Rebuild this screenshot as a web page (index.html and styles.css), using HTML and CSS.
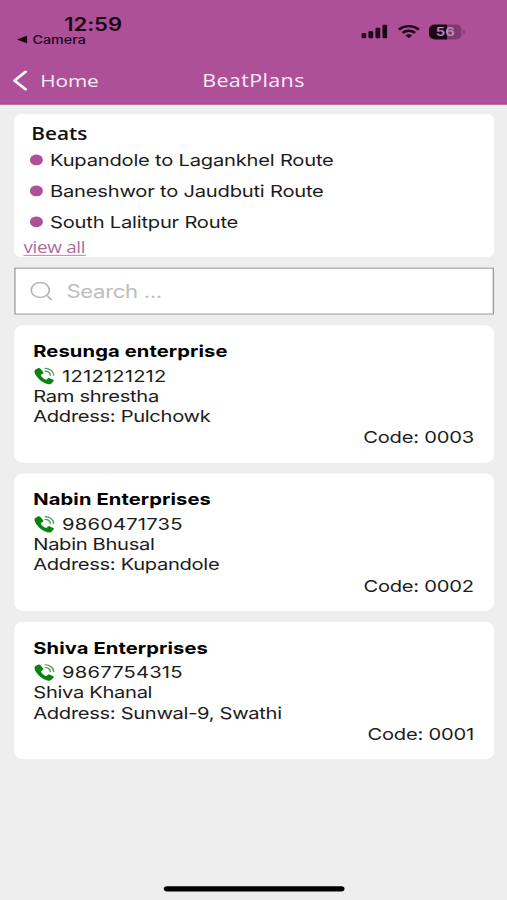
FILE: index.html
```html
<!DOCTYPE html>
<html lang="en">
<head>
<meta charset="utf-8">
<title>BeatPlans</title>
<link rel="stylesheet" href="styles.css">
</head>
<body>
<svg class="sprite" aria-hidden="true">
  <symbol id="call" viewBox="0 0 16 16">
    <path fill="#07830f" d="M3.200 .9 1.400 2C0 3.100.5 5.400 2 8.100c1.700 3 3.900 5.300 6.800 6.900 2.300 1.200 4.200 1.100 5.200-.4l1.300-1.700c.3-.5.1-1-.4-1.300l-2.700-1.500c-.5-.3-1-.2-1.300.2l-1 1c-.3.300-.7.300-1.100.1-1.300-.8-2.400-2-3.200-3.600-.2-.4-.1-.8.2-1l1.200-.9c.4-.3.500-.8.300-1.300L5.100 1.300c-.3-.6-1.300-.8-1.900-.4Z"/>
    <g fill="none" stroke="#4c9c58" stroke-width="1.100" stroke-linecap="round"><path d="M8.700 .9c3.600 0 6.600 2.900 6.600 6.500"/><path d="M8.700 3.500c2.200 0 4 1.700 4 3.900"/></g>
  </symbol>
</svg>
<div class="screen">
  <header class="header">
    <div class="status">
      <div class="status-left">
        <div class="time">12:59</div>
        <div class="return"><svg width="8" height="8" viewBox="0 0 8 8"><path d="M0 4 8 .2v7.600Z"/></svg><span>Camera</span></div>
      </div>
      <div class="status-icons">
        <svg class="signal" width="20" height="13" viewBox="0 0 20 13"><rect x="0" y="8" width="3.700" height="5" rx="1.200"/><rect x="5.400" y="6" width="3.700" height="7" rx="1.200"/><rect x="10.800" y="3" width="3.700" height="10" rx="1.200"/><rect x="16.200" y="0" width="3.700" height="13" rx="1.200"/></svg>
        <svg class="wifi" width="17" height="13" viewBox="0 0 17 13"><g fill="none" stroke="#1b0719" stroke-width="2.200"><path d="M.8 4.700c4.400-4.300 11-4.300 15.400 0"/><path d="M3.700 7.900c2.800-2.700 6.800-2.700 9.600 0"/></g><path d="M5.900 10.100c1.600-1.300 3.600-1.300 5.200 0L8.500 12.800Z"/></svg>
        <div class="battery"><div class="battery-body">56</div><div class="battery-cap"></div></div>
      </div>
    </div>
    <nav class="nav">
      <div class="back"><svg width="11" height="19" viewBox="0 0 11 19"><path d="M9.700 1.200 1.200 9.500l8.500 8.300" fill="none" stroke="#fff" stroke-width="2.300" stroke-linecap="round" stroke-linejoin="round"/></svg><span>Home</span></div>
      <h1>BeatPlans</h1>
      <div></div>
    </nav>
  </header>
  <main>
    <section class="beats">
      <h2>Beats</h2>
      <ul>
        <li>Kupandole to Lagankhel Route</li>
        <li>Baneshwor to Jaudbuti Route</li>
        <li>South Lalitpur Route</li>
      </ul>
      <a>view all</a>
    </section>
    <div class="search"><svg width="18" height="18" viewBox="0 0 18 18" fill="none" stroke="#b8b8b8" stroke-width="1.400" stroke-linecap="round"><circle cx="8" cy="8" r="7"/><path d="m13.200 13.200 3.300 3.800"/></svg><span>Search ...</span></div>
    <article class="card">
      <h3>Resunga enterprise</h3>
      <div class="phone"><svg width="16" height="17"><use href="#call"/></svg><span>1212121212</span></div>
      <div>Ram shrestha</div>
      <div>Address: Pulchowk</div>
      <div class="code">Code: 0003</div>
    </article>
    <article class="card">
      <h3>Nabin Enterprises</h3>
      <div class="phone"><svg width="16" height="17"><use href="#call"/></svg><span>9860471735</span></div>
      <div>Nabin Bhusal</div>
      <div>Address: Kupandole</div>
      <div class="code">Code: 0002</div>
    </article>
    <article class="card">
      <h3>Shiva Enterprises</h3>
      <div class="phone"><svg width="16" height="17"><use href="#call"/></svg><span>9867754315</span></div>
      <div>Shiva Khanal</div>
      <div>Address: Sunwal-9, Swathi</div>
      <div class="code">Code: 0001</div>
    </article>
  </main>
  <div class="home-indicator"></div>
</div>
</body>
</html>
```
FILE: styles.css
```css
* { box-sizing: border-box; }
html, body { margin: 0; width: 507px; height: 900px; overflow: hidden; background: #eee; }
.sprite { display: none; }
svg { display: block; flex: none; }
/* 390 x 844 pt canvas fitted to the window */
.screen {
  width: 390px; height: 844px;
  transform: scale(1.3, 1.06635); transform-origin: 0 0;
  display: flex; flex-direction: column;
  background: #eee; color: #1c1c1c;
  font: 15.5px/19.3px Inter, "Liberation Sans", sans-serif;
}
h1, h2, h3, ul { margin: 0; padding: 0; }
.header { height: 97.5px; background: #ad5097; border-bottom: 1px solid #a64a90; flex: none; }
.status { height: 54px; display: flex; justify-content: space-between; color: #1b0719; fill: #1b0719; }
.status-left { padding: 12.500px 0 0 18px; }
.time { margin-left: 31.500px; font-weight: 600; font-size: 17px; line-height: 20px; letter-spacing: -.1px; }
.return { display: flex; align-items: center; gap: 4px; margin: -1.300px 0 0 -5px; font-size: 11px; line-height: 12px; font-weight: 500; }
.status-icons { display: flex; align-items: center; padding: 5px 32.500px 0 0; height: 54px; }
.signal { position: relative; left: 2px; }
.wifi { margin-left: 9px; position: relative; left: 1px; }
.battery { display: flex; align-items: center; margin-left: 8px; gap: 1px; }
.battery-body { width: 25px; height: 14px; border-radius: 4.500px; background: linear-gradient(90deg, #1b0719 56%, #7b3b70 56%); color: #c48abb; font-size: 11.500px; font-weight: 600; line-height: 14px; text-align: center; }
.battery-cap { width: 1.500px; height: 4px; background: #8d407b; border-radius: 0 2px 2px 0; }
.nav { height: 43px; display: grid; grid-template-columns: 1fr auto 1fr; align-items: center; color: #fdeafa; font-family: "Open Sans", sans-serif; }
.back { display: flex; align-items: center; gap: 10.500px; padding-left: 9.500px; font-size: 16px; letter-spacing: -.1px; }
.back span { position: relative; top: 1.200px; }
.nav h1 { font-size: 16.500px; font-weight: 500; letter-spacing: .3px; }
main { padding: 9.500px 10px 0 10.600px; display: flex; flex-direction: column; gap: 9.800px; flex: 1; }
.beats { height: 134px; border-radius: 5px; background: #fff; padding: 6.900px 7.500px 0; }
.beats h2 { padding-left: 6px; font: 600 16px/22px "Open Sans", sans-serif; color: #111; }
.beats ul { list-style: none; }
.beats li { height: 29px; display: flex; align-items: center; gap: 5.400px; padding-left: 5px; letter-spacing: -.17px; }
.beats li::before { content: ""; width: 10px; height: 10.500px; border-radius: 50%; background: #ad5097; position: relative; top: -.5px; }
.beats a { display: block; width: max-content; margin-top: 1.500px; font: 14.500px/15px "Open Sans", sans-serif; letter-spacing: -.25px; color: #ae6b9e; border-bottom: 1px solid #c58ab8; }
.search { height: 44px; border: 1px solid #999; background: #fff; display: flex; align-items: center; gap: 10.500px; padding-left: 11px; color: #bdbdbd; font-size: 17px; letter-spacing: -.25px; }
.search span { position: relative; top: .7px; }
.card { height: 129.350px; border-radius: 7px; background: #fff; padding: 15px 15px 0; letter-spacing: -.25px; }
.card h3 { font-size: 15.500px; line-height: 20px; font-weight: 700; letter-spacing: .08px; color: #000; margin-bottom: 3px; }
.phone { display: flex; align-items: center; gap: 5.700px; letter-spacing: .15px; }
.phone svg { margin-left: 0.500px; }
.code { text-align: right; letter-spacing: -.18px; position: relative; left: -.5px; }
.home-indicator { width: 139px; height: 5px; border-radius: 3px; background: #000; margin: 0 auto 8.300px; }
```
